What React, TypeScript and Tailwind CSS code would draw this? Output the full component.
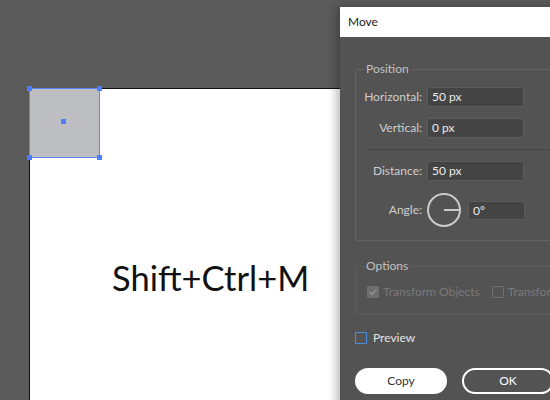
import React from "react"

const font = { fontFamily: "Lato, 'Noto Sans', sans-serif" }

function Field({ label, value }: { label: string; value: string }) {
  return (
    <div className="flex items-center h-[20px]">
      <span className="w-[66px] text-right text-[12px] text-[#cfcfcf]">{label}</span>
      <div className="ml-[5px] h-[20px] w-[97px] rounded-[2px] border border-[#5c5c5c] bg-[#444444] pl-[4px] text-[12px] leading-[18px] text-[#ececec]">
        {value}
      </div>
    </div>
  )
}

function Handle() {
  return <div className="h-[5px] w-[5px] bg-[#4f7dff]" />
}

export default function App() {
  return (
    <div className="relative h-[400px] w-[550px] overflow-hidden bg-[#5a5a5a]" style={font}>
      {/* artboard */}
      <div className="absolute left-[29px] top-[88px] h-[400px] w-[400px] border-l-[1.5px] border-t-[1.5px] border-[#111] bg-white">
        <div className="ml-[82px] mt-[169px] text-[34.5px] leading-[40px] text-[#111]">Shift+Ctrl+M</div>
      </div>

      {/* selected square */}
      <div className="absolute left-[29px] top-[88px] h-[70px] w-[71px] border border-[#5a84f0] bg-[#bdbec1]">
        <div className="absolute -left-[3px] -top-[3px]"><Handle /></div>
        <div className="absolute -right-[3px] -top-[3px]"><Handle /></div>
        <div className="absolute -left-[3px] -bottom-[3px]"><Handle /></div>
        <div className="absolute -right-[3px] -bottom-[3px]"><Handle /></div>
        <div className="absolute left-[31px] top-[30px]"><Handle /></div>
      </div>

      {/* Move dialog */}
      <div className="absolute left-[340px] top-[7px] flex h-[400px] w-[240px] flex-col bg-[#535353] shadow-[-4px_0_8px_rgba(0,0,0,0.25)]">
        <div className="flex h-[30px] items-center bg-white pl-[8px] text-[12px] text-[#1a1a1a]">Move</div>

        <div className="flex flex-col px-[15px]">
          <fieldset className="mt-[25px] rounded-[3px] border border-[#646464] pb-[13px]">
            <legend className="ml-[8px] px-[2px] text-[12px] leading-[14px] text-[#c2c2c2]">Position</legend>
            <div className="mt-[11px] flex flex-col gap-[11px]">
              <Field label="Horizontal:" value="50 px" />
              <Field label="Vertical:" value="0 px" />
            </div>
            <div className="mt-[11px] ml-[9px] h-px bg-[#464646]" />
            <div className="mt-[11px]">
              <Field label="Distance:" value="50 px" />
            </div>
            <div className="mt-[12px] flex h-[34px] items-center">
              <span className="w-[66px] text-right text-[12px] text-[#cfcfcf]">Angle:</span>
              <svg className="ml-[5px]" width="34" height="34" viewBox="0 0 34 34">
                <circle cx="17" cy="17" r="16" fill="none" stroke="#cacaca" strokeWidth="2" />
                <line x1="17" y1="17" x2="33" y2="17" stroke="#cacaca" strokeWidth="2" />
              </svg>
              <div className="ml-[7px] h-[19px] w-[57px] rounded-[2px] border border-[#5c5c5c] bg-[#444444] pl-[4px] text-[12px] leading-[17px] text-[#ececec]">
                0°
              </div>
            </div>
          </fieldset>

          <fieldset className="mt-[18px] rounded-[3px] border border-[#5e5e5e] pb-[13px]">
            <legend className="ml-[8px] px-[2px] text-[12px] leading-[14px] text-[#c2c2c2]">Options</legend>
            <div className="mt-[10px] flex items-center pl-[11px] text-[12px] text-[#7a7a7a]">
              <span className="flex h-[12px] w-[12px] shrink-0 items-center justify-center rounded-[1px] bg-[#6e6e6e]">
                <svg width="10" height="10" viewBox="0 0 10 10">
                  <path d="M1.5 5.2 L4 7.5 L8.5 2.5" fill="none" stroke="#8e8e8e" strokeWidth="1.6" />
                </svg>
              </span>
              <span className="ml-[4px] whitespace-nowrap">Transform Objects</span>
              <span className="ml-[12px] h-[12px] w-[12px] shrink-0 rounded-[1px] border border-[#6e6e6e]" />
              <span className="ml-[4px] whitespace-nowrap">Transform Patterns</span>
            </div>
          </fieldset>

          <div className="mt-[14px] flex items-center">
            <span className="h-[12px] w-[12px] border border-[#4b8be0]" />
            <span className="ml-[6px] text-[12px] text-[#e4e4e4]">Preview</span>
          </div>

          <div className="mt-[21px] flex gap-[15px]">
            <div className="flex h-[26px] w-[92px] items-center justify-center rounded-full bg-white text-[12px] text-[#333]">Copy</div>
            <div className="flex h-[26px] w-[92px] shrink-0 items-center justify-center rounded-full border-2 border-white text-[12px] text-white">OK</div>
          </div>
        </div>
      </div>
    </div>
  )
}
